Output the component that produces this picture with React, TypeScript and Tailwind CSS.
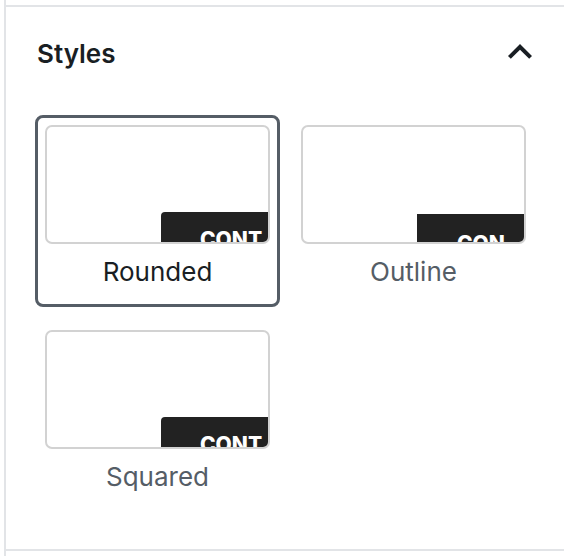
import React from 'react'

type StyleOption = {
    name: string
    label: string
    boxTop: string
    textPad: string
    boxRound: string
    selected?: boolean
}

const options: StyleOption[] = [
    { name: 'rounded', label: 'Rounded', boxTop: 'mt-[85px]', textPad: 'pt-[18px] pl-[39px]', boxRound: 'rounded-tl-[4px]', selected: true },
    { name: 'outline', label: 'Outline', boxTop: 'mt-[87px]', textPad: 'pt-[20px] pl-[40px]', boxRound: '' },
    { name: 'squared', label: 'Squared', boxTop: 'mt-[85px]', textPad: 'pt-[18px] pl-[39px]', boxRound: 'rounded-tl-[4px]' },
]

const StyleItem: React.FC<{ option: StyleOption }> = ({ option }) => (
    <button
        type="button"
        className={`flex w-[245px] flex-col rounded-[8px] border-[3px] px-[7px] pt-[7px] pb-[14px] text-left ${
            option.selected ? 'border-[#555d66]' : 'border-transparent'
        }`}
    >
        {/* Preview */}
        <div className="flex h-[119px] w-[225px] flex-col overflow-hidden rounded-[7px] border-2 border-[#d2d2d2] bg-white">
            <div className={`ml-auto h-[60px] w-[107px] shrink-0 bg-[#222222] ${option.boxTop} ${option.boxRound}`}>
                <div className={`text-[21px] font-extrabold leading-[20px] text-white ${option.textPad}`}>
                    {option.name === 'outline' ? 'CON' : 'CONT'}
                </div>
            </div>
        </div>
        <span
            className={`mt-[10px] block text-center text-[26px] leading-[36px] ${
                option.selected ? 'text-[#191e23]' : 'text-[#555d66]'
            }`}
        >
            {option.label}
        </span>
    </button>
)

export default function App() {
    return (
        <div
            className="h-[556px] w-[564px] overflow-hidden bg-white"
            style={{ fontFamily: 'Inter, "Noto Sans", sans-serif' }}
        >
            <div className="ml-[4px] h-full border-l-2 border-[#e2e4e7] pt-[5px]">
                <div className="h-[546px] border-y-2 border-[#e2e4e7]">
                    {/* Panel header */}
                    <div className="flex items-start justify-between pt-[21px] pr-[20px] pl-[31px]">
                        <h2 className="mt-[8px] text-[26px] font-semibold leading-[36px] text-[#191e23]">Styles</h2>
                        <svg width="48" height="48" viewBox="0 0 24 24" className="text-[#191e23]" fill="currentColor">
                            <path d="M12 8l-6 6 1.41 1.41L12 10.83l4.59 4.58L18 14z" />
                        </svg>
                    </div>

                    {/* Style options */}
                    <div className="mt-[39px] grid grid-cols-[245px_245px] gap-x-[11px] gap-y-[13px] pl-[29px]">
                        {options.map((o) => (
                            <StyleItem key={o.name} option={o} />
                        ))}
                    </div>
                </div>
            </div>
        </div>
    )
}
